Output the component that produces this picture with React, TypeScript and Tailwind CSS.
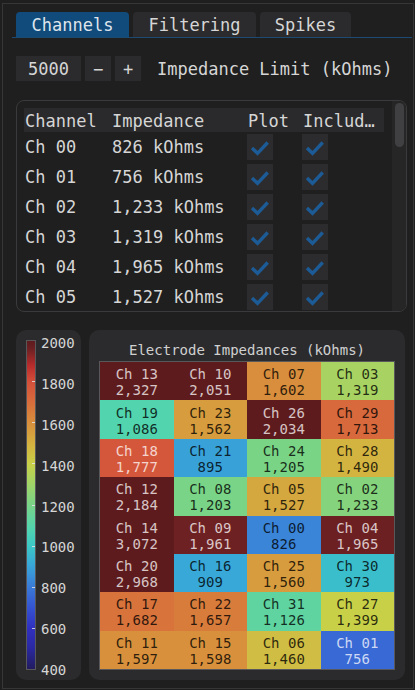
import React from "react";

const FONT = { fontFamily: '"DejaVu Sans Mono", "Liberation Mono", monospace' };

const STOPS: [number, string][] = [
  [400, "#221c5e"],
  [500, "#2a28a0"],
  [600, "#3030c0"],
  [690, "#3450d0"],
  [800, "#3a7ad8"],
  [910, "#38a8d8"],
  [1000, "#3cc8c6"],
  [1080, "#50d4b0"],
  [1200, "#78d488"],
  [1300, "#a0d468"],
  [1400, "#c8d048"],
  [1490, "#d4b440"],
  [1600, "#d88f3c"],
  [1710, "#d86a3c"],
  [1800, "#d4503a"],
  [1880, "#b82c2c"],
  [1960, "#6e2123"],
  [2000, "#5e1b1d"],
];

function hex(c: string) {
  return [1, 3, 5].map((i) => parseInt(c.slice(i, i + 2), 16));
}

function colorFor(v: number) {
  if (v <= STOPS[0][0]) return STOPS[0][1];
  if (v >= STOPS[STOPS.length - 1][0]) return STOPS[STOPS.length - 1][1];
  for (let i = 0; i < STOPS.length - 1; i++) {
    const [a, ca] = STOPS[i];
    const [b, cb] = STOPS[i + 1];
    if (v >= a && v <= b) {
      const t = (v - a) / (b - a);
      const A = hex(ca);
      const B = hex(cb);
      const m = A.map((x, k) => Math.round(x + (B[k] - x) * t));
      return `rgb(${m[0]},${m[1]},${m[2]})`;
    }
  }
  return "#000";
}

const gradient =
  "linear-gradient(to top, " +
  STOPS.map(([v, c]) => `${c} ${(((v - 400) / 1600) * 100).toFixed(2)}%`).join(", ") +
  ")";

const GRID: [string, number][][] = [
  [["13", 2327], ["10", 2051], ["07", 1602], ["03", 1319]],
  [["19", 1086], ["23", 1562], ["26", 2034], ["29", 1713]],
  [["18", 1777], ["21", 895], ["24", 1205], ["28", 1490]],
  [["12", 2184], ["08", 1203], ["05", 1527], ["02", 1233]],
  [["14", 3072], ["09", 1961], ["00", 826], ["04", 1965]],
  [["20", 2968], ["16", 909], ["25", 1560], ["30", 973]],
  [["17", 1682], ["22", 1657], ["31", 1126], ["27", 1399]],
  [["11", 1597], ["15", 1598], ["06", 1460], ["01", 756]],
];

const TABLE: [string, number][] = [
  ["00", 826],
  ["01", 756],
  ["02", 1233],
  ["03", 1319],
  ["04", 1965],
  ["05", 1527],
];

const fmt = (n: number) => n.toLocaleString("en-US");

function Check() {
  return (
    <div className="w-[26px] h-[26px] bg-[#2c2c2e] flex items-center justify-center">
      <svg width="26" height="26" viewBox="0 0 26 26">
        <polyline
          points="5,14 10.5,19.3 20.7,8.5"
          fill="none"
          stroke="#1c5b96"
          strokeWidth="3.4"
          strokeLinecap="butt"
          strokeLinejoin="miter"
        />
      </svg>
    </div>
  );
}

export default function App() {
  return (
    <div
      className="w-[415px] h-[690px] bg-[#1f1f1f] pt-[3px] pl-[2px] pr-[1px] pb-[1px] text-[#d6d6d6]"
      style={FONT}
    >
      <div className="h-full border border-[#363636] flex flex-col pt-[8px]">
        {/* Tabs */}
        <div className="ml-[9px] mr-[1px] pl-[4px] flex gap-[4px] border-b border-[#1c4a73] text-[17px]">
          <div className="w-[113px] h-[25px] pt-[3px] rounded-t-[4px] bg-[#114b7b] flex items-center justify-center text-[#dfe5ec]">
            Channels
          </div>
          <div className="w-[123px] h-[25px] pt-[3px] rounded-t-[4px] bg-[#2b2b2d] flex items-center justify-center">
            Filtering
          </div>
          <div className="w-[91px] h-[25px] pt-[3px] rounded-t-[4px] bg-[#2b2b2d] flex items-center justify-center">
            Spikes
          </div>
        </div>

        <div className="ml-[13px] mr-[6px] flex flex-col">
          {/* Impedance limit row */}
          <div className="mt-[18px] flex items-center h-[25px] text-[17px]">
            <div className="w-[65px] h-[25px] pt-[2px] bg-[#2b2b2d] flex items-center pl-[12px]">5000</div>
            <div className="ml-[4px] w-[26px] h-[25px] pt-[2px] bg-[#2b2b2d] flex items-center justify-center">−</div>
            <div className="ml-[4px] w-[26px] h-[25px] pt-[2px] bg-[#2b2b2d] flex items-center justify-center">+</div>
            <div className="ml-[16px] pt-[2px]">Impedance Limit (kOhms)</div>
          </div>

          {/* Table */}
          <div className="mt-[19px] h-[212px] border border-[#3a3a3c] rounded-[8px] overflow-hidden flex text-[17px]">
            <div className="flex-1 pl-[7px] pt-[7px] flex flex-col">
              <div className="w-[360px] h-[24px] pt-[3px] shrink-0 bg-[#2a2a2c] flex items-center">
                <div className="w-[87px] pl-[1px]">Channel</div>
                <div className="w-[136px] pl-[1px]">Impedance</div>
                <div className="w-[55px] pl-[1px]">Plot</div>
                <div className="w-[82px] pl-[1px]">Includ…</div>
              </div>
              {TABLE.map(([ch, v]) => (
                <div key={ch} className="h-[30px] shrink-0 flex items-center">
                  <div className="w-[87px] pl-[1px] pt-[2px]">Ch {ch}</div>
                  <div className="w-[136px] pl-[1px] pt-[2px]">{fmt(v)} kOhms</div>
                  <div className="w-[55px]">
                    <Check />
                  </div>
                  <div className="w-[82px]">
                    <Check />
                  </div>
                </div>
              ))}
            </div>
            <div className="w-[14px] bg-[#262627] pt-[2px] pl-[3px]">
              <div className="w-[9px] h-[44px] rounded-full bg-[#404042]" />
            </div>
          </div>

          {/* Bottom plots */}
          <div className="mt-[18px] h-[350px] flex gap-[8px] mr-[2px] text-[14px]">
            {/* Colorbar */}
            <div className="w-[65px] rounded-[10px] bg-[#2b2b2d] pl-[10px] py-[10px] flex">
              <div
                className="w-[10px] h-full border border-[#58585a] relative"
                style={{ background: gradient }}
              >
                <div className="absolute inset-0 flex flex-col justify-between items-end">
                  {[0, 1, 2, 3, 4, 5, 6, 7, 8].map((i) => (
                    <div
                      key={i}
                      className={
                        i === 0 || i === 8
                          ? "h-0 w-[3px]"
                          : "h-[1px] w-[3px] bg-[#e8e8e8]/80"
                      }
                    />
                  ))}
                </div>
              </div>
              <div className="ml-[5px] pt-[3px] flex flex-col justify-between text-[#d6d6d6]">
                {["2000", "1800", "1600", "1400", "1200", "1000", "800", "600", "400"].map((l) => (
                  <div key={l} className="h-0 flex items-center leading-[16px]">
                    {l}
                  </div>
                ))}
              </div>
            </div>

            {/* Heatmap */}
            <div className="flex-1 rounded-[10px] bg-[#2b2b2d] px-[10px] pt-[10px] pb-[10px] flex flex-col">
              <div className="h-[18px] leading-[18px] pt-[1px] text-center text-[#d0d0d0]">
                Electrode Impedances (kOhms)
              </div>
              <div className="mt-[3px] flex-1 border border-[#58585a] grid grid-cols-4 grid-rows-8">
                {GRID.flat().map(([ch, v]) => {
                  const light = v >= 1750 || v < 800;
                  return (
                    <div
                      key={ch}
                      className={
                        "flex flex-col items-center justify-center pt-[2px] leading-[16px] " +
                        (light ? "text-white/75" : "text-black/80")
                      }
                      style={{ background: colorFor(v) }}
                    >
                      <div>Ch {ch}</div>
                      <div>{fmt(v)}</div>
                    </div>
                  );
                })}
              </div>
            </div>
          </div>
        </div>
      </div>
    </div>
  );
}
